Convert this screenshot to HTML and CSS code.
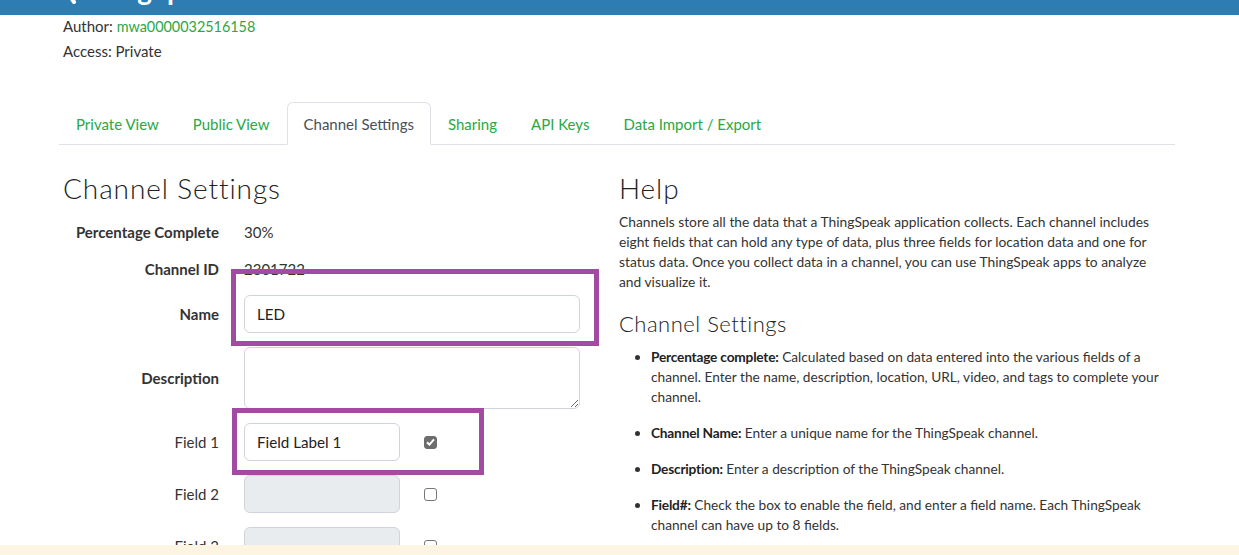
FILE: index.html
```html
<!DOCTYPE html>
<html lang="en">
<head>
<meta charset="utf-8">
<title>Channel Settings - ThingSpeak</title>
<link rel="stylesheet" href="styles.css">
</head>
<body>
<header class="topbar">
  <div class="title">
    <svg class="chev" width="14" height="30" viewBox="0 0 14 30"><path d="M12 2 L3 15 L12 28" fill="none" stroke="#fff" stroke-width="4" stroke-linecap="round" stroke-linejoin="round"/></svg>
    <span class="title-text">ThingSpeak</span>
  </div>
</header>

<div class="container">
  <div class="meta">
    <p>Author: <a href="#" class="green">mwa0000032516158</a></p>
    <p>Access: Private</p>
  </div>

  <ul class="tabs">
    <li><a href="#">Private View</a></li>
    <li><a href="#">Public View</a></li>
    <li class="active"><a href="#">Channel Settings</a></li>
    <li><a href="#">Sharing</a></li>
    <li><a href="#">API Keys</a></li>
    <li><a href="#">Data Import / Export</a></li>
  </ul>

  <div class="main">
    <section class="left">
      <h2 class="h-light">Channel Settings</h2>
      <form class="form">
        <div class="row text-row">
          <label class="lbl strong">Percentage Complete</label>
          <span class="val">30%</span>
        </div>
        <div class="row text-row">
          <label class="lbl strong">Channel ID</label>
          <span class="val">2301722</span>
        </div>
        <div class="row">
          <label class="lbl strong">Name</label>
          <input class="inp wide" type="text" value="LED">
        </div>
        <div class="row">
          <label class="lbl strong">Description</label>
          <textarea class="inp wide area"></textarea>
        </div>
        <div class="row">
          <label class="lbl">Field 1</label>
          <input class="inp short" type="text" value="Field Label 1">
          <span class="cb checked"><svg width="9" height="8" viewBox="0 0 9 8"><path d="M1 4.2 L3.4 6.6 L8 1.4" fill="none" stroke="#fff" stroke-width="2"/></svg></span>
        </div>
        <div class="row">
          <label class="lbl">Field 2</label>
          <input class="inp short" type="text" disabled>
          <span class="cb"></span>
        </div>
        <div class="row">
          <label class="lbl">Field 3</label>
          <input class="inp short" type="text" disabled>
          <span class="cb"></span>
        </div>
        <div class="mark mark-name"></div>
        <div class="mark mark-field"></div>
      </form>
    </section>

    <section class="right">
      <h2 class="h-light">Help</h2>
      <p class="para">Channels store all the data that a ThingSpeak application collects. Each channel includes eight fields that can hold any type of data, plus three fields for location data and one for status data. Once you collect data in a channel, you can use ThingSpeak apps to analyze and visualize it.</p>
      <h3 class="h-light h3">Channel Settings</h3>
      <ul class="help-list">
        <li><b>Percentage complete:</b> Calculated based on data entered into the various fields of a channel. Enter the name, description, location, URL, video, and tags to complete your channel.</li>
        <li><b>Channel Name:</b> Enter a unique name for the ThingSpeak channel.</li>
        <li><b>Description:</b> Enter a description of the ThingSpeak channel.</li>
        <li><b>Field#:</b> Check the box to enable the field, and enter a field name. Each ThingSpeak channel can have up to 8 fields.</li>
      </ul>
    </section>
  </div>
</div>

<div class="cookie"></div>
</body>
</html>
```

FILE: styles.css
```css
* { box-sizing: border-box; }
html, body { margin: 0; padding: 0; }
body {
  font-family: "Lato", "Liberation Sans", sans-serif;
  font-size: 15px;
  color: #333;
  background: #fff;
  overflow: hidden;
  height: 555px;
}

.topbar {
  background: #2d7db3;
  height: 15px;
  overflow: hidden;
}
.title {
  display: flex;
  align-items: flex-end;
  margin-left: 62px;
  margin-top: -26px;
  color: #fff;
  font-weight: 700;
  font-size: 28px;
  line-height: 30px;
  height: 30px;
}
.chev { display: block; margin-right: 6px; }
.title-text { display: block; }

.container {
  margin-left: 59px;
  width: 1116px;
}

.meta { padding-left: 4px; margin-top: -1px; }
.meta p { margin: 0; line-height: 24px; font-size: 15px; }
.green { color: #2aa845; text-decoration: none; font-size: 14.4px; }

.tabs {
  list-style: none;
  margin: 39px 0 0;
  padding: 0;
  display: flex;
  border-bottom: 1px solid #dee2e6;
  height: 43px;
}
.tabs li { margin-bottom: -1px; }
.tabs a {
  display: block;
  padding: 9px 16px 9px;
  line-height: 24px;
  font-size: 15px;
  color: #2aa845;
  text-decoration: none;
  border: 1px solid transparent;
  border-radius: 6px 6px 0 0;
  height: 43px;
}
.tabs li.active a {
  color: #495057;
  border-color: #dee2e6 #dee2e6 #fff;
  background: #fff;
}

.main {
  display: grid;
  grid-template-columns: 545px 571px;
  margin-top: 26px;
}

.h-light {
  font-family: "Lato", sans-serif;
  font-weight: 300;
  font-size: 28px;
  line-height: 34px;
  margin: 0;
  color: #222;
  letter-spacing: 0.9px;
}

.left { padding-left: 4px; }
.form {
  position: relative;
  margin-top: 15px;
  display: flex;
  flex-direction: column;
  gap: 14px;
}
.row {
  display: flex;
  align-items: center;
  gap: 25px;
  min-height: 38px;
}
.row.text-row { min-height: 24px; height: 24px; }
.row.text-row + .row.text-row { margin-top: -1px; }
.lbl {
  width: 156px;
  text-align: right;
  font-size: 15px;
  color: #333;
}
.lbl.strong { font-weight: 700; }
.val { font-size: 15px; color: #333; }

.inp {
  font-family: "Lato", sans-serif;
  font-size: 15.2px;
  color: #222;
  border: 1px solid #ced4da;
  border-radius: 6px;
  height: 38px;
  padding: 0 12px;
  background: #fff;
  outline: none;
}
.inp.wide { width: 336px; }
.inp.short { width: 156px; }
.inp:disabled { background: #e9ecef; }
.area { height: 62px; resize: vertical; display: block; }

.cb {
  width: 13px;
  height: 13px;
  border: 1px solid #767676;
  border-radius: 3px;
  margin-left: -1px;
  display: flex;
  align-items: center;
  justify-content: center;
  background: #fff;
}
.cb.checked { background: #6d6d6d; border-color: #6d6d6d; }
.cb svg { display: block; }

.mark {
  position: absolute;
  border: 5px solid #a24ba2;
  pointer-events: none;
}
.mark-name { left: 168px; top: 49px; width: 368px; height: 77px; }
.mark-field { left: 169px; top: 188px; width: 252px; height: 67px; }

.right { padding-left: 15px; padding-right: 11px; }
.para {
  margin: 7px 0 0;
  font-size: 13.8px;
  line-height: 20px;
  color: #333;
}
.h3 {
  font-size: 22px;
  line-height: 26px;
  margin-top: 19px;
  letter-spacing: 0.5px;
}
.help-list {
  margin: 10px 0 0;
  padding-left: 32px;
  font-size: 13.7px;
  line-height: 20px;
}
.help-list li { margin-bottom: 16px; }
.help-list b { font-weight: 700; color: #222; letter-spacing: -0.2px; }

.cookie {
  position: fixed;
  left: 0;
  right: 0;
  bottom: 0;
  height: 10px;
  background: #fdf5e2;
}
```
